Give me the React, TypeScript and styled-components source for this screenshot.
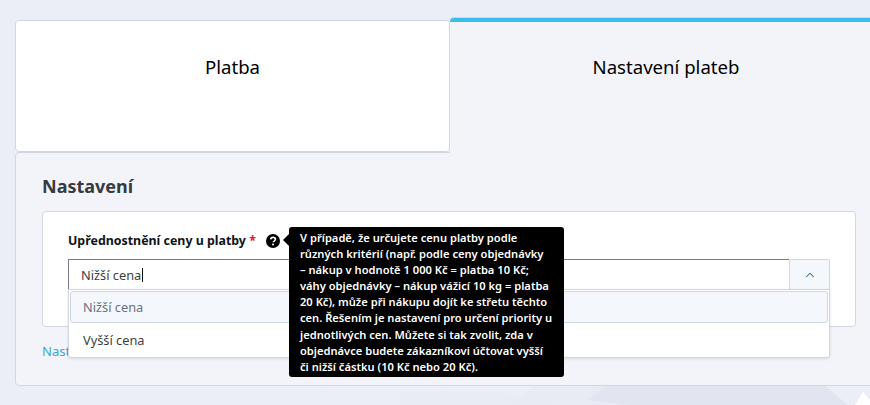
import { createGlobalStyle, styled } from 'styled-components';
import { ChevronUp } from 'lucide-react';

const GlobalStyle = createGlobalStyle`
  html, body {
    margin: 0;
    padding: 0;
    height: 405px;
    overflow: hidden;
    background: #ebeef6;
    font-family: "Noto Sans", "Open Sans", sans-serif;
    color: #000;
  }
`;

export default function App() {
  return (
    <Page>
      <GlobalStyle />
      <Backdrop viewBox="0 0 870 405" aria-hidden="true">
        <polygon points="400,391 500,393 587,400 630,405 400,405" fill="#e9ecf4" />
        <polygon points="512,405 535,386 606,386 587,400" fill="#e8ebf3" />
        <polygon points="587,400 606,386 825,386 848,405 630,405" fill="#e1e5ef" />
        <polygon points="855,405 863,392 870,400 870,405" fill="#ffffff" />
      </Backdrop>
      <Tabs>
        <Tab>Platba</Tab>
        <Tab $active>Nastavení plateb</Tab>
      </Tabs>
      <Panel>
        <Title>Nastavení</Title>
        <Card>
          <LabelRow>
            <Label>
              Upřednostnění ceny u platby <Required>*</Required>
            </Label>
            <HelpIcon viewBox="0 0 14 14" aria-hidden="true">
              <circle cx="7" cy="7" r="7" fill="#000" />
              <path
                d="M4.7 5.4c.1-1.3 1-2 2.4-2 1.3 0 2.3.8 2.3 1.9 0 1-.6 1.4-1.2 1.8-.5.3-.8.6-.8 1.2"
                fill="none"
                stroke="#fff"
                strokeWidth="1.6"
              />
              <rect x="6.1" y="9.6" width="1.8" height="1.7" fill="#fff" />
            </HelpIcon>
            <Tooltip>
              V případě, že určujete cenu platby podle
              <br />
              různých kritérií (např. podle ceny objednávky
              <br />
              – nákup v hodnotě 1 000 Kč = platba 10 Kč;
              <br />
              váhy objednávky – nákup vážicí 10 kg = platba
              <br />
              20 Kč), může při nákupu dojít ke střetu těchto
              <br />
              cen. Řešením je nastavení pro určení priority u
              <br />
              jednotlivých cen. Můžete si tak zvolit, zda v
              <br />
              objednávce budete zákazníkovi účtovat vyšší
              <br />
              či nižší částku (10 Kč nebo 20 Kč).
            </Tooltip>
          </LabelRow>
          <SelectBox>
            <SelectValue>
              Nižší cena
              <Caret />
            </SelectValue>
            <SelectToggle>
              <ChevronUp size={14} strokeWidth={1.8} color="#33658a" />
            </SelectToggle>
            <Dropdown>
              <Option $highlighted>Nižší cena</Option>
              <Option>Vyšší cena</Option>
            </Dropdown>
          </SelectBox>
        </Card>
        <HelpLink>Nast</HelpLink>
      </Panel>
    </Page>
  );
}

const Page = styled.div`
  position: relative;
  width: 870px;
  height: 405px;
  padding: 18px 0 0 15px;
  box-sizing: border-box;
  overflow: hidden;
`;

const Backdrop = styled.svg`
  position: absolute;
  inset: 0;
  width: 870px;
  height: 405px;
`;

const Tabs = styled.div`
  position: relative;
  z-index: 1;
  display: flex;
  align-items: flex-end;
  width: 875px;
  height: 134px;
`;

const Tab = styled.div<{ $active?: boolean }>`
  box-sizing: border-box;
  width: ${(p) => (p.$active ? '440px' : '435px')};
  height: ${(p) => (p.$active ? '135px' : '132px')};
  margin-bottom: ${(p) => (p.$active ? '-1px' : '0')};
  padding: ${(p) => (p.$active ? '32px 8px 0 0' : '33px 0 0')};
  text-align: center;
  font-size: 18.6px;
  line-height: 26px;
  background: ${(p) => (p.$active ? '#f2f4f9' : '#fff')};
  border: ${(p) => (p.$active ? 'none' : '1px solid #d0d6e2')};
  border-top: ${(p) => (p.$active ? '4px solid #3bbcec' : '1px solid #d0d6e2')};
  border-radius: ${(p) => (p.$active ? '4px 0 0 0' : '4px')};
  box-shadow: ${(p) => (p.$active ? '0 -1px 0 #d0d6e2' : 'none')};
`;

const Panel = styled.section`
  position: relative;
  box-sizing: border-box;
  width: 875px;
  height: 234px;
  padding: 21px 0 0 26px;
  background: #f2f4f9;
  border: 1px solid #d0d6e2;
  border-radius: 4px;
`;

const Title = styled.h2`
  margin: 0 0 13px;
  font-size: 18px;
  line-height: 24px;
  font-weight: 700;
  color: #363a42;
`;

const Card = styled.div`
  position: relative;
  box-sizing: border-box;
  width: 814px;
  height: 116px;
  padding: 20px 25px 0;
  background: #fff;
  border: 1px solid #d0d6e2;
  border-radius: 4px;
`;

const LabelRow = styled.div`
  position: relative;
  display: flex;
  align-items: center;
  height: 18px;
  margin-bottom: 9px;
`;

const Label = styled.label`
  font-size: 12.4px;
  line-height: 18px;
  font-weight: 700;
  color: #10131a;
`;

const Required = styled.span`
  color: #d9213d;
`;

const HelpIcon = styled.svg`
  width: 14px;
  height: 14px;
  margin-left: 10px;
`;

const Tooltip = styled.div`
  position: absolute;
  z-index: 3;
  left: 221px;
  top: -5px;
  box-sizing: border-box;
  width: 275px;
  height: 150px;
  padding: 3px 11px;
  background: #000;
  color: #fff;
  border-radius: 3px;
  font-size: 11.15px;
  line-height: 16.1px;
  font-weight: 600;
  white-space: nowrap;

  &::before {
    content: '';
    position: absolute;
    left: -6px;
    top: 7px;
    border-style: solid;
    border-width: 6px 6px 6px 0;
    border-color: transparent #000 transparent transparent;
  }
`;

const SelectBox = styled.div`
  position: relative;
  display: flex;
  width: 762px;
  height: 31px;
  background: #fff;
`;

const SelectValue = styled.div`
  flex: 1;
  display: flex;
  align-items: center;
  padding-left: 12px;
  font-size: 12.8px;
  color: #3a3f48;
  border-top: 1px solid #757b8a;
  border-left: 1px solid #757b8a;
`;

const Caret = styled.span`
  display: inline-block;
  width: 1px;
  height: 14px;
  margin-left: 1px;
  background: #111;
`;

const SelectToggle = styled.div`
  display: flex;
  align-items: center;
  justify-content: center;
  box-sizing: border-box;
  width: 41px;
  background: #f4f8fc;
  border: 1px solid #d0d6e2;
  border-radius: 2px 2px 0 0;
`;

const Dropdown = styled.div`
  position: absolute;
  z-index: 2;
  left: 0;
  top: 30px;
  box-sizing: border-box;
  width: 762px;
  height: 69px;
  padding: 1px 1px 0;
  background: #fff;
  border: 1px solid #d0d6e2;
  border-radius: 0 0 3px 3px;
  box-shadow: 0 1px 3px rgba(60, 70, 90, 0.15);
`;

const Option = styled.div<{ $highlighted?: boolean }>`
  box-sizing: border-box;
  height: 32px;
  margin-bottom: ${(p) => (p.$highlighted ? '1px' : '0')};
  padding-left: 12px;
  display: flex;
  align-items: center;
  font-size: 12.8px;
  color: ${(p) => (p.$highlighted ? '#6a7280' : '#3a3f48')};
  background: ${(p) => (p.$highlighted ? '#f4f8fc' : 'transparent')};
  border: 1px solid ${(p) => (p.$highlighted ? '#d0d6e2' : 'transparent')};
  border-radius: 3px;
`;

const HelpLink = styled.a`
  display: block;
  margin-top: 15px;
  font-size: 13px;
  line-height: 18px;
  color: #3aa3d8;
`;
